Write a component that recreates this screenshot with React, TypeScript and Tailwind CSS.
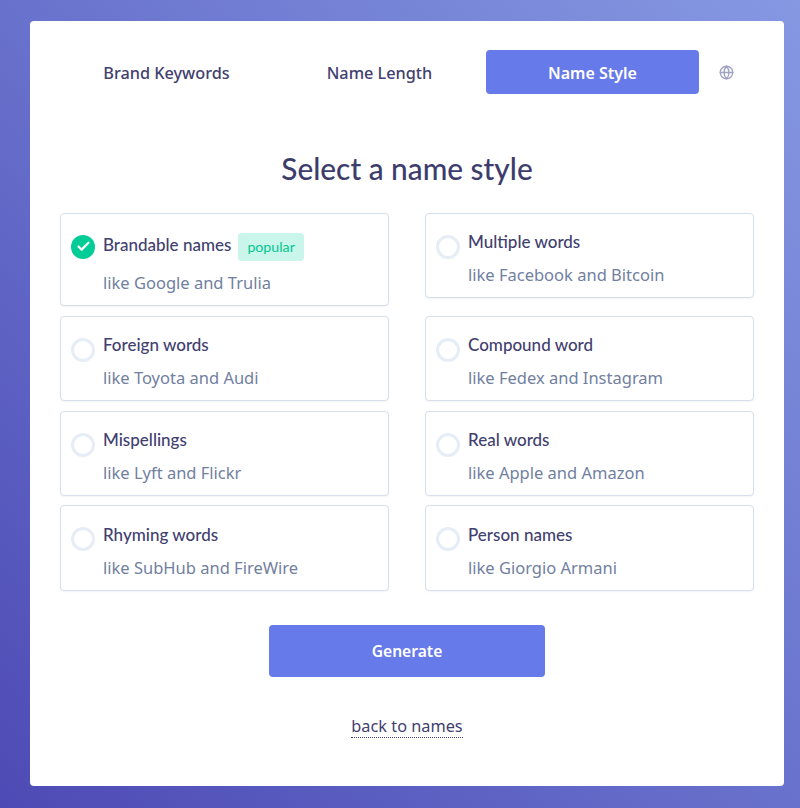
import { Check, Globe } from "lucide-react";

const bodyFont = "font-['Noto_Sans','Open_Sans',sans-serif]";
const headFont = "font-['Lato','Noto_Sans',sans-serif]";

type Style = {
  name: string;
  hint: string;
  selected?: boolean;
  popular?: boolean;
};

const styles: Style[] = [
  { name: "Brandable names", hint: "like Google and Trulia", selected: true, popular: true },
  { name: "Multiple words", hint: "like Facebook and Bitcoin" },
  { name: "Foreign words", hint: "like Toyota and Audi" },
  { name: "Compound word", hint: "like Fedex and Instagram" },
  { name: "Mispellings", hint: "like Lyft and Flickr" },
  { name: "Real words", hint: "like Apple and Amazon" },
  { name: "Rhyming words", hint: "like SubHub and FireWire" },
  { name: "Person names", hint: "like Giorgio Armani" },
];

function StyleCard({ name, hint, selected, popular }: Style) {
  return (
    <div
      className={`flex items-start rounded border border-[#d5e0ec] bg-white pl-[10px] pt-[16.3px] shadow-[0_1px_2px_rgba(50,60,120,0.06)] ${
        popular ? "h-[93.4px]" : "h-[85.4px]"
      }`}
    >
      {selected ? (
        <span className="mt-[4.7px] grid h-6 w-6 shrink-0 place-content-center rounded-full bg-[#03cc96] text-white">
          <Check size={15} strokeWidth={3.5} />
        </span>
      ) : (
        <span className="mt-[4.7px] h-6 w-6 shrink-0 rounded-full border-[3px] border-[#e6edf6]" />
      )}
      <div className="ml-2">
        {popular ? (
          <div className="mt-[3px] flex h-7 items-center">
            <span className={`${headFont} -mt-1 text-[17px] leading-6 font-medium text-[#41406f]`}>{name}</span>
            <span className={`${headFont} ml-[7px] rounded bg-[#c9f5ea] px-[9px] py-[5px] text-[14.2px] leading-[18px] text-[#03c792]`}>
              popular
            </span>
          </div>
        ) : (
          <div className={`${headFont} text-[17px] leading-6 font-medium text-[#41406f]`}>{name}</div>
        )}
        <p className={`${bodyFont} mt-[10px] text-[16.5px] leading-[22px] text-[#71809f] ${popular ? "pt-px" : ""}`}>{hint}</p>
      </div>
    </div>
  );
}

export default function App() {
  return (
    <div className="h-[808px] w-full overflow-hidden bg-gradient-to-tr from-[#4e4ab5] to-[#8698e2] pl-[30px] pr-4 pt-[21px]">
      <div className="h-[765px] w-[754px] rounded bg-white px-[30px] pt-[29px]">
        <nav className={`${bodyFont} flex items-center text-[16.25px] font-medium text-[#41406f]`}>
          <a className="flex h-11 w-[213px] items-center justify-center pt-[2px]">Brand Keywords</a>
          <a className="flex h-11 w-[213px] items-center justify-center pt-[2px]">Name Length</a>
          <a className="flex h-11 w-[213px] items-center justify-center rounded bg-[#677ae9] pt-px text-[16px] font-semibold text-white">
            Name Style
          </a>
          <Globe size={15} className="ml-5 text-[#a0a2c2]" strokeWidth={2.2} />
        </nav>

        <h1 className={`${headFont} mt-[56px] text-center text-[29.8px] leading-[38px] font-medium text-[#3d3d6d]`}>
          Select a name style
        </h1>

        <div className="mt-[25px] grid grid-cols-[329px_329px] items-start justify-between gap-y-[9.4px]">
          {styles.map((s) => (
            <StyleCard key={s.name} {...s} />
          ))}
        </div>

        <div className="mt-[34px] flex justify-center">
          <button type="button" className={`${bodyFont} h-[52px] w-[276px] rounded bg-[#677ae9] pt-px text-[15.6px] font-semibold text-white`}>
            Generate
          </button>
        </div>

        <div className="mt-[37px] text-center">
          <a className={`${bodyFont} border-b border-dotted border-[#3d3d6d] text-[16.3px] leading-[22px] text-[#41406f]`}>
            back to names
          </a>
        </div>
      </div>
    </div>
  );
}
